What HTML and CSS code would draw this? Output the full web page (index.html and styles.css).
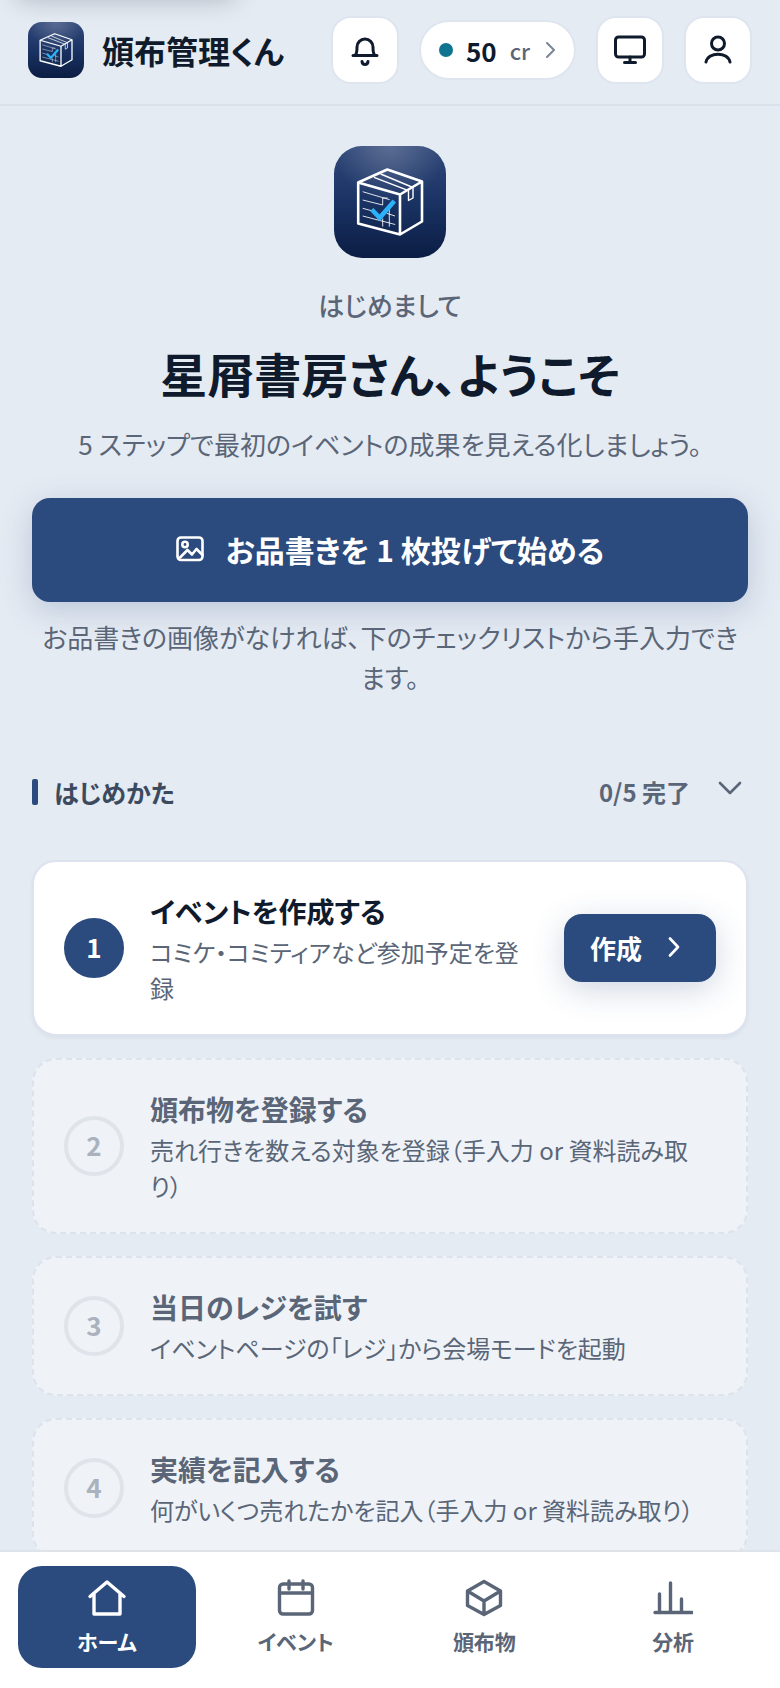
FILE: index.html
```
<!DOCTYPE html>
<html lang="ja">
<head>
    <meta charset="UTF-8">
    <meta name="viewport" content="width=device-width, initial-scale=1.0">
    <title>頒布管理くん</title>
    <link rel="stylesheet" href="styles.css">
</head>
<body>
    <!-- logo shared by the header and the hero -->
    <svg class="defs" width="0" height="0" aria-hidden="true">
        <defs>
            <linearGradient id="logo-bg" x1="0" y1="0" x2="0" y2="1">
                <stop offset="0" stop-color="#30497a"/>
                <stop offset="0.5" stop-color="#1a3364"/>
                <stop offset="1" stop-color="#0b1d43"/>
            </linearGradient>
            <radialGradient id="logo-glow" cx="0.5" cy="0" r="0.5">
                <stop offset="0" stop-color="#8791ac" stop-opacity="0.5"/>
                <stop offset="1" stop-color="#8791ac" stop-opacity="0"/>
            </radialGradient>
        </defs>
        <symbol id="logo" viewBox="0 0 112 112">
            <rect width="112" height="112" rx="28" fill="url(#logo-bg)"/>
            <rect width="112" height="112" rx="28" fill="url(#logo-glow)"/>
            <g fill="none" stroke="#fff" stroke-linejoin="round">
                <path stroke-width="2.600" d="M53.300 23.500 24.200 36.500v41L66 88.500 88 75.500v-40zM24.200 36.500 66 48.500l22-13M66 48.500v40"/>
                <path stroke-width="1.400" d="M40 31.300l34.500 13.400V54.500l4.500-2.500V41.500L46.700 28"/>
                <path stroke-width="1" opacity="0.85" d="M28.700 45.700l27 8M28.700 54l20 5v-7h5M28.700 62.300l10 2.700M52.700 67.300l8.300 2.700M28.700 70l32.500 8.500M48.700 72.500v8M55.300 62v18.700"/>
            </g>
            <path fill="none" stroke="#2bb2f8" stroke-width="4.600" d="M37.700 63.500l8 8.300L60.300 55"/>
        </symbol>
    </svg>

    <div class="app">
        <a class="skip-link" href="#main" aria-label="本文へスキップ"></a>
        <header class="header">
            <a class="brand" href="#">
                <svg class="brand-logo" aria-hidden="true"><use href="#logo"/></svg>
                <span>頒布管理くん</span>
            </a>
            <div class="header-actions">
                <button class="icon-btn" aria-label="通知">
                    <svg width="32" height="32" viewBox="0 0 32 32"><path d="M4 21.500h24M6.500 21c1.500-2 1.500-4 1.500-8a8 8 0 0 1 16 0c0 4 0 6 1.500 8M13 27.500c.5 4 5.500 4 6 0"/></svg>
                </button>
                <button class="credit">
                    <span class="credit-dot"></span>
                    <b>50</b>
                    <span class="credit-unit">cr</span>
                    <svg width="10" height="16" viewBox="0 0 10 16"><path d="M1 1l7 7-7 7"/></svg>
                </button>
                <button class="icon-btn" aria-label="表示">
                    <svg width="32" height="32" viewBox="0 0 32 32"><rect x="1.500" y="3" width="29" height="20" rx="3"/><path d="M16 23v5M10.500 28.500h11"/></svg>
                </button>
                <button class="icon-btn" aria-label="アカウント">
                    <svg width="32" height="32" viewBox="0 0 32 32"><circle cx="16" cy="9.500" r="6.500"/><path d="M4 28c2.500-10.500 21.500-10.500 24 0"/></svg>
                </button>
            </div>
        </header>

        <main class="main" id="main">
            <section class="hero">
                <svg class="hero-logo" aria-hidden="true"><use href="#logo"/></svg>
                <p class="hero-greet">はじめまして</p>
                <h1>星屑書房さん、ようこそ</h1>
                <p class="hero-lead">5 ステップで最初のイベントの成果を見える化しましょう。</p>
                <button class="start-btn">
                    <svg width="28" height="26" viewBox="0 0 28 26"><rect x="1.500" y="1.500" width="25" height="22.500" rx="3.500"/><circle cx="9" cy="8.500" r="2.700"/><path d="M4 21.500l7.500-7.500 4.500 4.500 4.500-5.500 6 6"/></svg>
                    <span>お品書きを 1 枚投げて始める</span>
                </button>
                <p class="hero-note">お品書きの画像がなければ、下のチェックリストから手入力できます。</p>
            </section>

            <section class="guide">
                <div class="guide-head">
                    <h2>はじめかた</h2>
                    <span class="guide-count">0/5 完了</span>
                    <button class="guide-toggle" aria-label="折りたたむ">
                        <svg width="24" height="14" viewBox="0 0 24 14"><path d="M2 2l10 10L22 2"/></svg>
                    </button>
                </div>
                <ol class="steps">
                    <li class="step step-current">
                        <span class="step-num">1</span>
                        <div class="step-body">
                            <h3>イベントを作成する</h3>
                            <p>コミケ・コミティアなど参加予定を登録</p>
                        </div>
                        <button class="step-btn">作成
                            <svg width="12" height="20" viewBox="0 0 12 20"><path d="M2 1.500l8 8.500-8 8.500"/></svg>
                        </button>
                    </li>
                    <li class="step">
                        <span class="step-num">2</span>
                        <div class="step-body">
                            <h3>頒布物を登録する</h3>
                            <p>売れ行きを数える対象を登録（手入力 or 資料読み取り）</p>
                        </div>
                    </li>
                    <li class="step">
                        <span class="step-num">3</span>
                        <div class="step-body">
                            <h3>当日のレジを試す</h3>
                            <p>イベントページの「レジ」から会場モードを起動</p>
                        </div>
                    </li>
                    <li class="step">
                        <span class="step-num">4</span>
                        <div class="step-body">
                            <h3>実績を記入する</h3>
                            <p>何がいくつ売れたかを記入（手入力 or 資料読み取り）</p>
                        </div>
                    </li>
                </ol>
            </section>
        </main>

        <nav class="tabbar">
            <a class="tab tab-active" href="#">
                <svg width="40" height="40" viewBox="0 0 40 40"><path d="M3 18.500 20 4l17 14.500M7 16v20h26V16"/></svg>
                <span>ホーム</span>
            </a>
            <a class="tab" href="#">
                <svg width="40" height="40" viewBox="0 0 40 40"><rect x="3.500" y="6" width="33" height="30" rx="3.500"/><path d="M3.500 15h33M13 3v8M27 3v8"/></svg>
                <span>イベント</span>
            </a>
            <a class="tab" href="#">
                <svg width="40" height="40" viewBox="0 0 40 40"><path d="M20 3.500 36.500 13v14.500L20 36.500 3.500 27.500V13zM3.500 13 20 23l16.500-10M20 23v13"/></svg>
                <span>頒布物</span>
            </a>
            <a class="tab" href="#">
                <svg width="40" height="40" viewBox="0 0 40 40"><path d="M2 34.500h37M6.500 34V16M17.500 34V5M28.500 34V21"/></svg>
                <span>分析</span>
            </a>
        </nav>
    </div>
</body>
</html>
```
FILE: styles.css
```
* {
    box-sizing: border-box;
}
body {
    margin: 0;
    background: #e5ebf3;
    color: #0f1b2d;
    font-family: "Noto Sans CJK JP", sans-serif;
    font-feature-settings: "palt";
}
h1, h2, h3, p, ol {
    margin: 0;
    padding: 0;
}
a {
    color: inherit;
    text-decoration: none;
}
button {
    border: 0;
    padding: 0;
    color: inherit;
    font: inherit;
    font-feature-settings: inherit;
    cursor: pointer;
}
svg {
    flex: none;
    fill: none;
    stroke: currentColor;
    stroke-width: 3;
    stroke-linecap: round;
    stroke-linejoin: round;
}
.defs {
    position: absolute;
}
.brand-logo, .hero-logo {
    stroke: none;
    stroke-linecap: butt;
    stroke-linejoin: miter;
}
.app {
    display: flex;
    flex-direction: column;
    height: 100vh;
    overflow: hidden;
}
/* sits just above the page until it gets focus */
.skip-link {
    position: absolute;
    top: -64px;
    left: 16px;
    width: 220px;
    height: 60px;
    border-radius: 12px;
    background: #fff;
    box-shadow: 0 4px 24px rgba(15, 27, 45, 0.25);
}
.skip-link:focus {
    top: 16px;
}

/* header */
.header {
    display: flex;
    align-items: center;
    justify-content: space-between;
    padding: 16px 28px 20px;
    border-bottom: 2px solid #dae1ea;
}
.brand {
    display: flex;
    align-items: center;
    gap: 18px;
    font-size: 32px;
    font-weight: 700;
    line-height: 44px;
}
.brand-logo {
    width: 56px;
    height: 56px;
}
.header-actions {
    display: flex;
    align-items: center;
    gap: 20px;
}
.icon-btn, .credit {
    display: flex;
    align-items: center;
    justify-content: center;
    border: 2px solid #dfe5ef;
    background: #fff;
}
.icon-btn {
    width: 68px;
    height: 68px;
    border-radius: 20px;
}
.credit {
    height: 60px;
    padding: 0 18px;
    border-radius: 30px;
    font-size: 26px;
}
.credit b {
    margin: 0 13px;
    font-weight: 700;
}
.credit-dot {
    width: 14px;
    height: 14px;
    border-radius: 50%;
    background: #0e7490;
}
.credit-unit {
    margin-right: 16px;
    color: #5a6677;
    font-size: 22px;
    font-weight: 500;
}
.credit svg {
    color: #7b8594;
    stroke-width: 2;
}

/* hero */
.main {
    flex: 1;
    min-height: 0;
    overflow: hidden;
    padding: 40px 32px 0;
}
.hero {
    display: flex;
    flex-direction: column;
    align-items: center;
    text-align: center;
    color: #5a6677;
    font-size: 26px;
    line-height: 40px;
}
.hero-logo {
    width: 112px;
    height: 112px;
}
.hero-greet {
    margin-top: 27px;
    font-weight: 500;
}
.hero h1 {
    margin: 18px 0 21px;
    color: #0f1b2d;
    font-size: 47px;
    font-weight: 700;
    line-height: 60px;
}
.start-btn {
    display: flex;
    align-items: center;
    justify-content: center;
    gap: 22px;
    width: 100%;
    height: 104px;
    margin: 34px 0 15px;
    padding-bottom: 2px;
    border-radius: 18px;
    background: #2b4a7d;
    color: #fff;
    font-size: 30px;
    font-weight: 700;
    box-shadow: 0 8px 32px rgba(43, 74, 125, 0.22);
}
.start-btn svg {
    stroke-width: 2.6;
}

/* checklist */
.guide-head {
    display: flex;
    align-items: center;
    margin: 75px 0 48px;
    line-height: 40px;
}
.guide-head h2 {
    display: flex;
    align-items: center;
    gap: 16px;
    margin-right: auto;
    color: #3c4a5e;
    font-size: 25px;
    font-weight: 700;
}
.guide-head h2::before {
    content: "";
    width: 6px;
    height: 26px;
    border-radius: 2px;
    background: #2b4a7d;
}
.guide-count {
    color: #5a6677;
    font-size: 24px;
    font-weight: 700;
}
.guide-toggle {
    display: flex;
    margin: 0 6px 8px 28px;
    background: none;
    color: #5a6677;
}
.guide-toggle svg {
    stroke-width: 2.6;
}
.steps {
    display: flex;
    flex-direction: column;
    gap: 22px;
    list-style: none;
}
.step {
    display: flex;
    align-items: center;
    gap: 26px;
    padding: 28px 30px;
    border: 2px dashed #dde3ec;
    border-radius: 24px;
    background: #eff3f8;
    color: #5a6677;
}
.step-num {
    display: flex;
    flex: none;
    align-items: center;
    justify-content: center;
    width: 60px;
    height: 60px;
    padding-bottom: 3px;
    border: 4px solid #dfe4ea;
    border-radius: 50%;
    color: #aab2bd;
    font-size: 26px;
    font-weight: 700;
}
.step-body {
    flex: 1;
    font-size: 24px;
    line-height: 36px;
}
.step-body h3 {
    margin-bottom: 2px;
    font-size: 28px;
    font-weight: 700;
    line-height: 42px;
}
.step-current {
    border: 2px solid #dce3ef;
    background: #fff;
    box-shadow: 0 2px 4px rgba(15, 27, 45, 0.05);
}
.step-current .step-num {
    border-color: #2b4a7d;
    background: #2b4a7d;
    color: #fff;
}
.step-current p {
    color: #5a6677;
}
.step-current h3 {
    color: #0f1b2d;
}
.step-btn {
    display: flex;
    align-items: center;
    gap: 26px;
    width: 152px;
    height: 68px;
    padding: 0 26px 2px;
    border-radius: 18px;
    background: #2b4a7d;
    color: #fff;
    font-size: 26px;
    font-weight: 700;
    box-shadow: 0 8px 32px rgba(43, 74, 125, 0.22);
}
.step-btn svg {
    stroke-width: 2.6;
}

/* bottom tabs */
.tabbar {
    display: flex;
    gap: 11px;
    padding: 14px 18px 20px;
    border-top: 2px solid #dfe4ea;
    background: #fff;
}
.tab {
    display: flex;
    flex: 1;
    flex-direction: column;
    align-items: center;
    gap: 8px;
    padding: 12px 0;
    border-radius: 24px;
    color: #5a6677;
    font-size: 21px;
    font-weight: 700;
    line-height: 30px;
}
.tab svg {
    stroke-width: 3.4;
}
.tab-active {
    background: #2b4a7d;
    color: #fff;
}
```
